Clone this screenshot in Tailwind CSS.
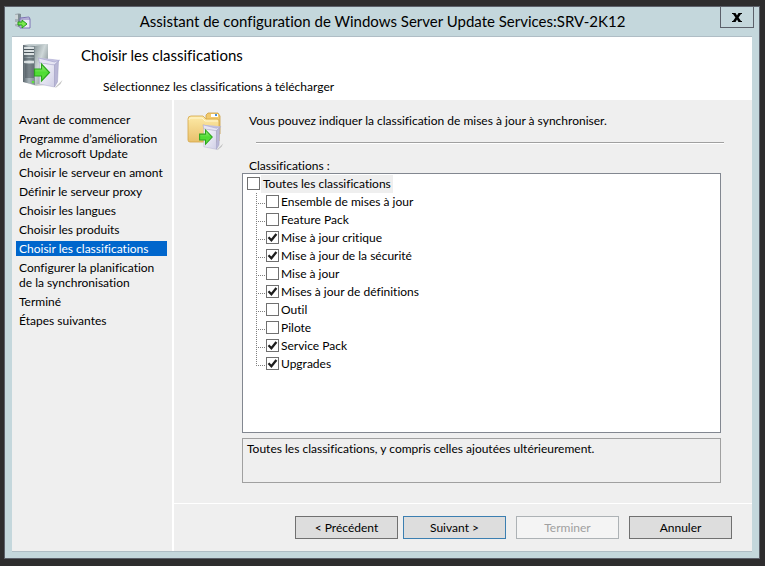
<!DOCTYPE html>
<html lang="fr">
<head>
    <meta charset="UTF-8">
    <title>Assistant de configuration de Windows Server Update Services:SRV-2K12</title>
    <meta name="viewport" content="width=device-width, initial-scale=1">
    <script src="https://cdn.jsdelivr.net/npm/@tailwindcss/browser@4"></script>
</head>
<body class="flex min-h-screen bg-[#2e2d2e] pt-[6px] pr-[5px] pb-[7px] pl-[4px] font-[Lato,'Open_Sans',sans-serif] text-[12px] leading-[15px] text-black [font-variant-ligatures:none]">

    <!-- Shared drawings -->
    <svg class="absolute size-0" aria-hidden="true">
        <defs>
            <linearGradient id="tower-front" x1="0" x2="1" y1="0" y2="0">
                <stop offset="0" stop-color="#59646b"/>
                <stop offset=".5" stop-color="#a9b5ba"/>
                <stop offset="1" stop-color="#7c898e"/>
            </linearGradient>
            <linearGradient id="tower-side" x1="0" x2="1" y1="0" y2="1">
                <stop offset="0" stop-color="#8c999c"/>
                <stop offset=".4" stop-color="#cfd8d9"/>
                <stop offset="1" stop-color="#5d6a6e"/>
            </linearGradient>
            <linearGradient id="box-front" x1="0" x2="1" y1="0" y2="1">
                <stop offset="0" stop-color="#fbfbfe"/>
                <stop offset="1" stop-color="#d0cfe6"/>
            </linearGradient>
            <linearGradient id="folder-front" x1="0" x2="0" y1="0" y2="1">
                <stop offset="0" stop-color="#fdeaa6"/>
                <stop offset="1" stop-color="#e9c06c"/>
            </linearGradient>
            <linearGradient id="arrow-fill" x1="0" x2="0" y1="0" y2="1">
                <stop offset="0" stop-color="#a4f383"/>
                <stop offset=".5" stop-color="#4fdc33"/>
                <stop offset="1" stop-color="#5fe03f"/>
            </linearGradient>
            <symbol id="package" viewBox="0 0 29 32">
                <path d="M22 30l7-7-2 4-5 4z" fill="#a9a9a9" opacity=".7"/>
                <path d="M5 1l2 5 15 2 4-5-7-1z" fill="#c3c1df"/>
                <path d="M5 1l1 5 15 2 5-5-5 2z" fill="#e6e5f3" stroke="#a3a1cb" stroke-width=".6"/>
                <path d="M6 6l15 2v22L6 27z" fill="url(#box-front)" stroke="#b5b3d2" stroke-width=".6"/>
                <path d="M21 8l4-4-1 21-3 5z" fill="#b9b7d6" stroke="#9c9ac0" stroke-width=".5"/>
                <path d="M1 12h7V7l8 8.500L8 24v-5H1z" fill="url(#arrow-fill)" stroke="#2ba51c" stroke-width="1.200"/>
            </symbol>
            <symbol id="check" viewBox="0 0 13 13">
                <path d="M2.500 6.200l2.900 3L10.400 3" fill="none" stroke="#1e1e1e" stroke-width="2.300"/>
            </symbol>
        </defs>
    </svg>

    <div class="flex grow flex-col border border-[#5c606a] bg-[#c4d7dc] px-[7px] pb-[6px]">

        <!-- Title bar -->
        <div class="-mr-[2px] flex h-[29px] items-start">
            <svg class="mt-[6px] ml-[2px] h-[16px] w-[17px]" viewBox="0 0 17 16">
                <path d="M1 1l4-1 2 1v12l-3 1-3-1z" fill="#a7b3b8"/>
                <path d="M4 1h3v12l-3 1z" fill="#7f8d93"/>
                <path d="M1 3h3M1 5h3M1 10h3" stroke="#f2f5f6"/>
                <path d="M6 5l9-1 1 2v9H6z" fill="#e9e8f5" stroke="#7d73b4"/>
                <path d="M6 6h10" stroke="#7d73b4"/>
                <path d="M4 9h4V7l5 4-5 4v-3H4z" fill="#7bea4e" stroke="#259b1b"/>
            </svg>
            <h1 class="grow pt-[4px] pl-[14px] text-center text-[15px] leading-[20px]">Assistant de configuration de Windows Server Update Services:SRV-2K12</h1>
            <button type="button" aria-label="Fermer" class="grid h-[21px] w-[34px] place-items-center border border-t-0 border-[#5c606a]">
                <svg class="h-[9px] w-[10px]" viewBox="0 0 10 9">
                    <path d="M0 0h3.500L5 2.500 6.500 0H10v1H9L6.600 4.500 9 8h1v1H6.500L5 6.500 3.500 9H0V8h1l2.400-3.500L1 1H0z"/>
                </svg>
            </button>
        </div>

        <div class="flex grow flex-col border-y border-[#afbdc5] bg-[#efefef]">
            <!-- Header -->
            <header class="flex h-[63px] bg-white">
                <svg class="mt-[6px] ml-[10px] h-[46px] w-[42px]" viewBox="0 0 42 46">
                    <path d="M2 39l12 4 20-2-20-5z" fill="#cfcfcf"/>
                    <path d="M1 2l6-1h19l-9 3z" fill="#c5cfd1"/>
                    <path d="M1 2l12 1v39L1 39z" fill="url(#tower-front)"/>
                    <path d="M13 3l13-2v37l-13 4z" fill="url(#tower-side)"/>
                    <path d="M2 5h10M2 8h10M2 11h10M2 19h10" stroke="#f3f7f8" stroke-width="1.600"/>
                    <path d="M2 6.500h10M2 9.500h10M2 13h10M2 16h10" stroke="#4b565c"/>
                    <path d="M3 22h9M3 24h9M3 26h9M3 28h9M3 30h9M3 32h9M3 34h9" stroke="#414b51" stroke-width=".9"/>
                    <circle cx="11" cy="39" r="1.300" fill="#5be03c"/>
                    <use href="#package" x="11" y="14" width="30" height="32"/>
                </svg>
                <div class="pt-[8px] pl-[16px]">
                    <h2 class="pl-px text-[15px] leading-[20px]">Choisir les classifications</h2>
                    <p class="pt-[14px] pl-[23px]">Sélectionnez les classifications à télécharger</p>
                </div>
            </header>

            <div class="flex grow">
                <!-- Steps -->
                <nav class="w-[162px] shrink-0 border-r-2 border-white pt-[12px] pr-[5px] pl-[4px]">
                    <ol class="flex flex-col gap-[4px]">
                        <li class="px-[3px]">Avant de commencer</li>
                        <li class="px-[3px]">Programme d’amélioration<br>de Microsoft Update</li>
                        <li class="px-[3px]">Choisir le serveur en amont</li>
                        <li class="px-[3px]">Définir le serveur proxy</li>
                        <li class="px-[3px]">Choisir les langues</li>
                        <li class="px-[3px]">Choisir les produits</li>
                        <li class="bg-[#0066cc] px-[3px] text-white" aria-current="step">Choisir les classifications</li>
                        <li class="px-[3px]">Configurer la planification<br>de la synchronisation</li>
                        <li class="px-[3px]">Terminé</li>
                        <li class="px-[3px]">Étapes suivantes</li>
                    </ol>
                </nav>

                <form class="flex min-w-0 grow flex-col">
                    <main class="flex grow flex-col pr-[31px] pb-[20px] pl-[68px]">
                        <div class="-mr-[3px] -ml-[55px] flex h-[58px]">
                            <svg class="mt-[12px] h-[40px] w-[39px] shrink-0" viewBox="0 0 39 40">
                                <path d="M19 3l2-2h10l2 3v18H19z" fill="#f2ca6d" stroke="#cc9f43" stroke-width=".8"/>
                                <path d="M24 2h7v3h-7z" fill="#fff"/>
                                <path d="M28 2h2v2h-2z" fill="#4a90d9"/>
                                <path d="M1 7q0-3 3-3h12l3 3h11q2 0 2 2v20l-2 1H3q-2 0-2-2z" fill="url(#folder-front)" stroke="#d4a648" stroke-width=".8"/>
                                <path d="M2 8q0-2 2-2h11l3 3h13" fill="none" stroke="#fff6cf"/>
                                <use href="#package" x="11" y="12" width="26" height="27"/>
                            </svg>
                            <div class="flex grow flex-col pl-[23px]">
                                <p class="pt-[13px]">Vous pouvez indiquer la classification de mises à jour à synchroniser.</p>
                                <hr class="mt-[14px] ml-[7px] h-[2px] border-t border-b border-t-[#a0a0a0] border-b-white">
                            </div>
                        </div>

                        <h3 id="tree-label" class="pl-[7px]">Classifications :</h3>
                        <div role="group" aria-labelledby="tree-label" class="grow border border-[#828790] bg-white py-px pl-[4px]">
                            <label class="flex h-[18px] items-start gap-px">
                                <input type="checkbox" class="mt-[2px] size-[13px] appearance-none border border-[#707070] bg-white">
                                <span class="h-[18px] bg-[#efefef] px-[2px] pt-px">Toutes les classifications</span>
                            </label>
                            <ul id="tree" class="pl-[9px]"></ul>
                        </div>

                        <textarea readonly aria-label="Description" class="mt-[5px] h-[45px] w-full resize-none border border-[#a0a0a0] bg-[#efefef] px-[4px] pt-[2px]">Toutes les classifications, y compris celles ajoutées ultérieurement.</textarea>
                    </main>

                    <!-- Buttons -->
                    <footer class="flex h-[48px] justify-end border-t border-white pt-[12px] pr-[20px]">
                        <button type="button" class="h-[23px] w-[103px] border border-[#707070] bg-[#dddddd]">&lt; Précédent</button>
                        <button type="button" class="ml-[5px] h-[23px] w-[103px] border border-[#3c7fb1] bg-[#dddddd]">Suivant &gt;</button>
                        <button type="button" disabled class="ml-[10px] h-[23px] w-[103px] border border-[#adb2b5] bg-[#f4f4f4] text-[#a0a0a0]">Terminer</button>
                        <button type="button" class="ml-[10px] h-[23px] w-[103px] border border-[#707070] bg-[#dddddd]">Annuler</button>
                    </footer>
                </form>
            </div>
        </div>
    </div>

    <script>
    const items = [
        ['Ensemble de mises à jour', false],
        ['Feature Pack', false],
        ['Mise à jour critique', true],
        ['Mise à jour de la sécurité', true],
        ['Mise à jour', false],
        ['Mises à jour de définitions', true],
        ['Outil', false],
        ['Pilote', false],
        ['Service Pack', true],
        ['Upgrades', true],
    ];

    // dotted branch lines are drawn per row, the last one stops at its own box
    document.getElementById('tree').innerHTML = items.map(([name, checked], i) => `
        <li class="flex h-[18px]">
            <svg class="h-[18px] w-[10px]" viewBox="0 0 10 18" stroke="#808080" stroke-dasharray="1 1">
                <path d="M.5 0V${i === items.length - 1 ? 10 : 18}M0 10.500H10" fill="none"/>
            </svg>
            <label class="flex items-start gap-[2px]">
                <span class="mt-[2px] grid">
                    <input type="checkbox" class="peer col-start-1 row-start-1 size-[13px] appearance-none border border-[#707070] bg-white" ${checked ? 'checked' : ''}>
                    <svg class="pointer-events-none invisible col-start-1 row-start-1 size-[13px] peer-checked:visible"><use href="#check"/></svg>
                </span>
                <span class="pt-px">${name}</span>
            </label>
        </li>`).join('');
    </script>
</body>
</html>
